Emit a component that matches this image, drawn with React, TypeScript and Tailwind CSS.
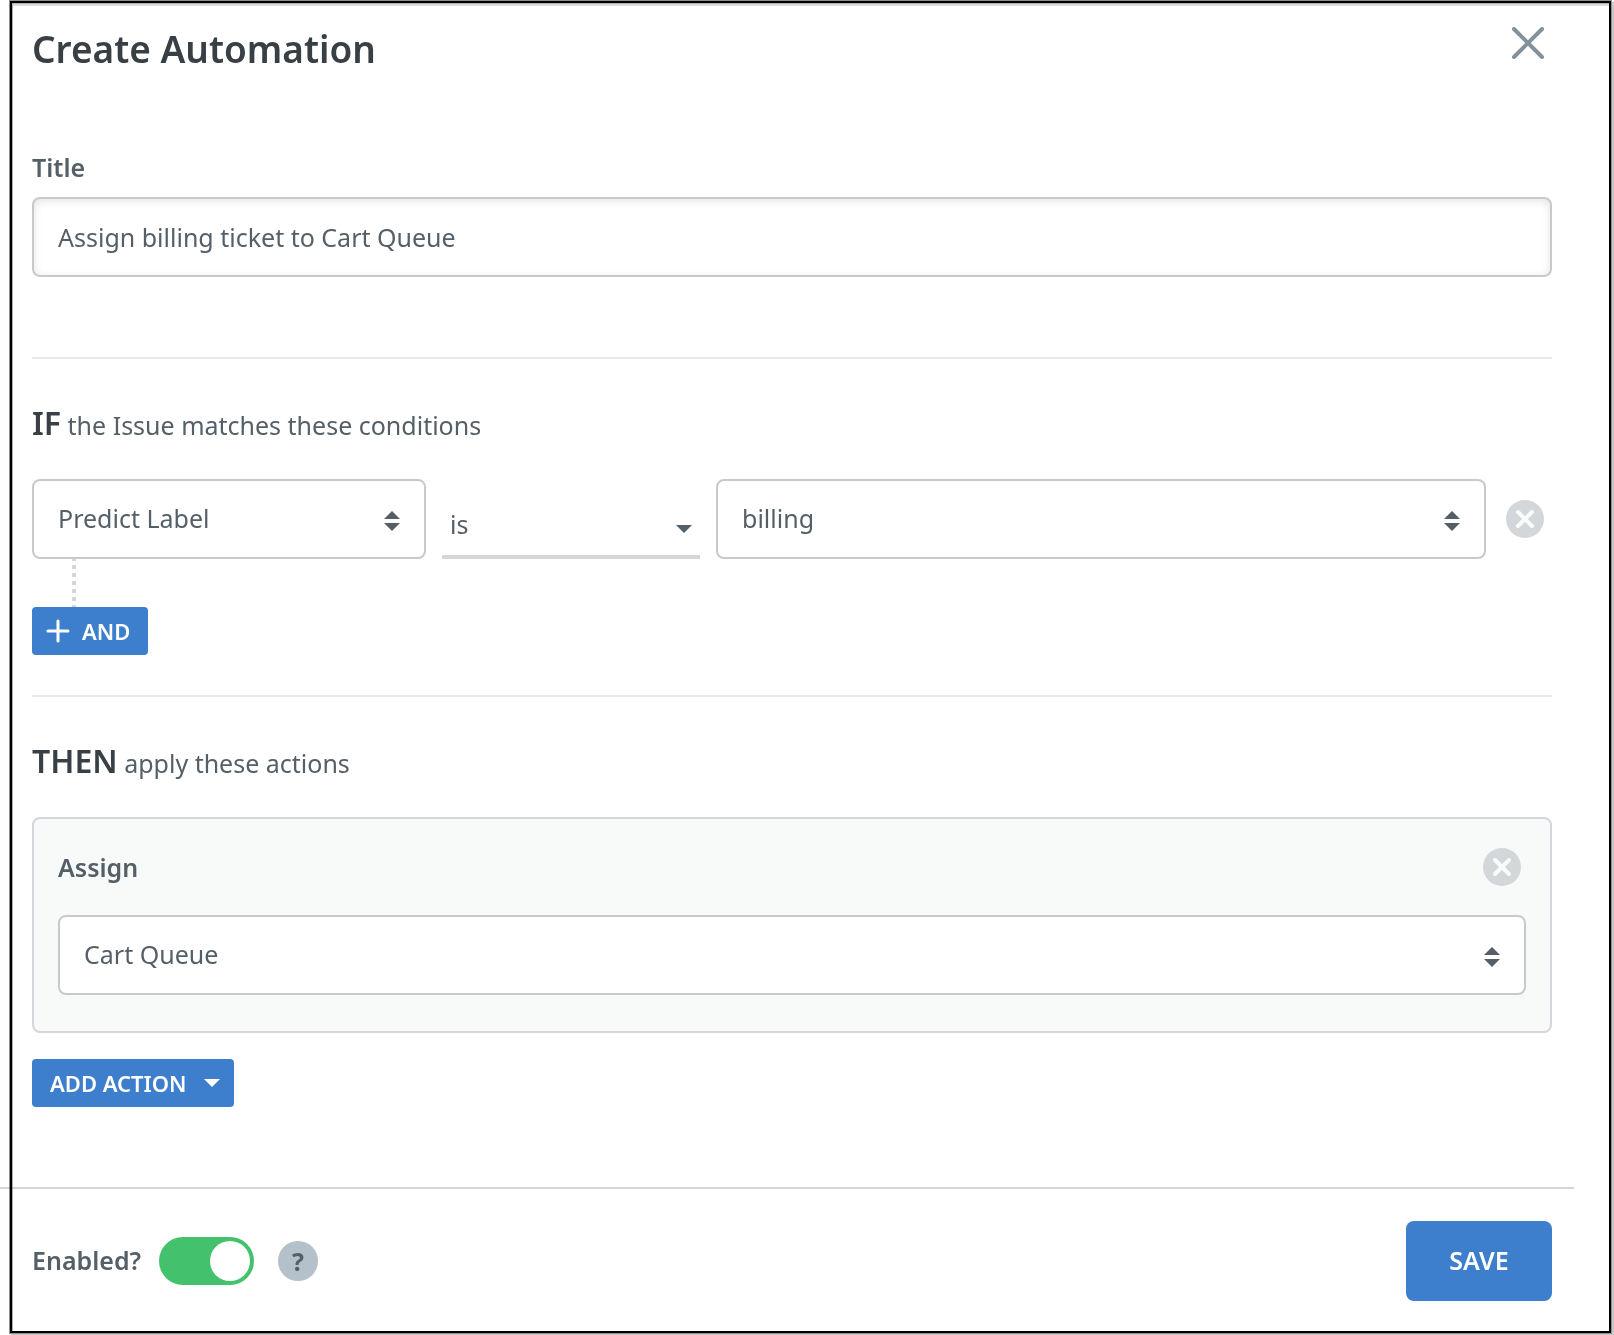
import type { ReactNode } from 'react';

function SortArrows() {
  return (
    <svg
      aria-hidden="true"
      className="pointer-events-none absolute right-[26px] top-8 h-5 w-4 fill-[#545f67]"
      viewBox="0 0 16 20"
    >
      <path d="M0 8 8 0l8 8zM0 12h16l-8 8z" />
    </svg>
  );
}

function BoxSelect({ id, label, value }: { id: string; label: string; value: string }) {
  return (
    <div className="relative">
      <select
        id={id}
        aria-label={label}
        defaultValue={value}
        className="block h-20 w-full appearance-none rounded-lg border-2 border-[#c8c9c9] bg-white px-6"
      >
        <option>{value}</option>
      </select>
      <SortArrows />
    </div>
  );
}

function RemoveButton({ label }: { label: string }) {
  return (
    <button type="button" aria-label={label} className="size-[38px] rounded-full bg-[#d3d7da]">
      <svg
        aria-hidden="true"
        className="size-full stroke-[#fafbfb]"
        viewBox="0 0 38 38"
        strokeWidth="4"
        strokeLinecap="round"
      >
        <path d="m12 12 14 14M26 12 12 26" />
      </svg>
    </button>
  );
}

function RuleHeading({ keyword, children }: { keyword: string; children: ReactNode }) {
  return (
    <h2 className="mt-11 mb-[34px] leading-10">
      <strong className="text-[32px] font-semibold text-[#383f45]">{keyword}</strong> {children}
    </h2>
  );
}

export default function App() {
  return (
    <div className="flex min-h-screen flex-col bg-white pt-px pr-[3px] pb-[2px] pl-[10px] font-['Noto_Sans',sans-serif] text-[25px] text-[#545f67]">
      <form
        className="flex grow flex-col border-2 border-black pl-5 shadow-[0_0_0_1px_#909090,2px_2px_1px_1px_#c8c8c8,inset_1px_1px_0_#b0b0b0,inset_1px_3px_0_#dddddd]"
        onSubmit={(e) => e.preventDefault()}
      >
        <div className="pr-[57px]">
          <header className="flex items-start justify-between pt-[22px] pr-2">
            <h1 className="text-[37px] leading-12 font-semibold text-[#383f45]">Create Automation</h1>
            <button type="button" aria-label="Close" className="mt-[2px]">
              <svg
                aria-hidden="true"
                className="size-8 stroke-[#84919a]"
                viewBox="0 0 32 32"
                strokeWidth="4"
                strokeLinecap="round"
              >
                <path d="m2 2 28 28M30 2 2 30" />
              </svg>
            </button>
          </header>

          <label htmlFor="title" className="mt-[78px] block leading-8 font-semibold">
            Title
          </label>
          <input
            id="title"
            type="text"
            defaultValue="Assign billing ticket to Cart Queue"
            className="mt-[14px] block h-20 w-full rounded-lg border-2 border-[#c8c9c9] px-6 shadow-[inset_0_2px_8px_#e4e4e4]"
          />

          <section className="mt-20 border-t-2 border-[#e8e9ea]">
            <RuleHeading keyword="IF">the Issue matches these conditions</RuleHeading>
            <div className="flex items-center gap-4 pr-2">
              <div className="w-[394px]">
                <BoxSelect id="field" label="Condition field" value="Predict Label" />
              </div>
              <div className="relative w-[258px] self-end">
                <select
                  aria-label="Comparison"
                  defaultValue="is"
                  className="block h-16 w-full appearance-none border-b-4 border-[#d3d7da] bg-white px-2"
                >
                  <option>is</option>
                </select>
                <svg
                  aria-hidden="true"
                  className="pointer-events-none absolute top-[30px] right-2 h-2 w-4 fill-[#545f67]"
                  viewBox="0 0 16 8"
                >
                  <path d="M0 0h16L8 8z" />
                </svg>
              </div>
              <div className="mr-1 grow">
                <BoxSelect id="value" label="Condition value" value="billing" />
              </div>
              <RemoveButton label="Remove condition" />
            </div>
            <svg aria-hidden="true" className="ml-10 h-12 w-1 stroke-[#d3d7da]" viewBox="0 0 4 48">
              <path d="M2 0v48" strokeWidth="4" strokeDasharray="4 4" strokeDashoffset="2" />
            </svg>
            <button
              type="button"
              className="flex h-12 items-center gap-3 rounded bg-[#3d7ecd] pr-[18px] pl-[14px] text-[22px] font-semibold text-white"
            >
              <svg
                aria-hidden="true"
                className="size-6 stroke-white"
                viewBox="0 0 24 24"
                strokeWidth="3"
                strokeLinecap="round"
              >
                <path d="M12 2v20M2 12h20" />
              </svg>
              AND
            </button>
          </section>

          <section className="mt-10 border-t-2 border-[#e8e9ea]">
            <RuleHeading keyword="THEN">apply these actions</RuleHeading>
            <div className="rounded-lg border-2 border-[#d3d7da] bg-[#f8faf9] px-6 pb-9">
              <div className="flex items-center justify-between py-[29px] pr-[5px]">
                <label htmlFor="assignee" className="leading-8 font-semibold">
                  Assign
                </label>
                <RemoveButton label="Remove action" />
              </div>
              <BoxSelect id="assignee" label="Assign" value="Cart Queue" />
            </div>
            <button
              type="button"
              className="mt-[26px] flex h-12 items-center gap-[17px] rounded bg-[#3d7ecd] pr-[14px] pl-[18px] text-[22px] font-semibold text-white"
            >
              ADD ACTION
              <svg aria-hidden="true" className="h-2 w-4 fill-white" viewBox="0 0 16 8">
                <path d="M0 0h16L8 8z" />
              </svg>
            </button>
          </section>
        </div>

        <footer className="mt-20">
          <hr className="mr-[35px] -ml-8 border-t-2 border-[#d3d7da] mix-blend-multiply" />
          <div className="flex items-center pt-8 pr-[57px] pb-7">
            <label htmlFor="enabled" className="font-semibold">
              Enabled?
            </label>
            <input
              id="enabled"
              type="checkbox"
              role="switch"
              defaultChecked
              className="ml-[18px] flex h-12 w-[95px] appearance-none items-center rounded-full bg-[#b4c0ca] px-1 before:size-10 before:rounded-full before:bg-white checked:justify-end checked:bg-[#43c16c]"
            />
            <button
              type="button"
              aria-label="Help"
              className="ml-6 size-10 rounded-full bg-[#b4c0ca] leading-10 font-bold"
            >
              ?
            </button>
            <button
              type="submit"
              className="ml-auto h-20 w-[146px] rounded-lg bg-[#3d7ecd] font-semibold text-white"
            >
              SAVE
            </button>
          </div>
        </footer>
      </form>
    </div>
  );
}
